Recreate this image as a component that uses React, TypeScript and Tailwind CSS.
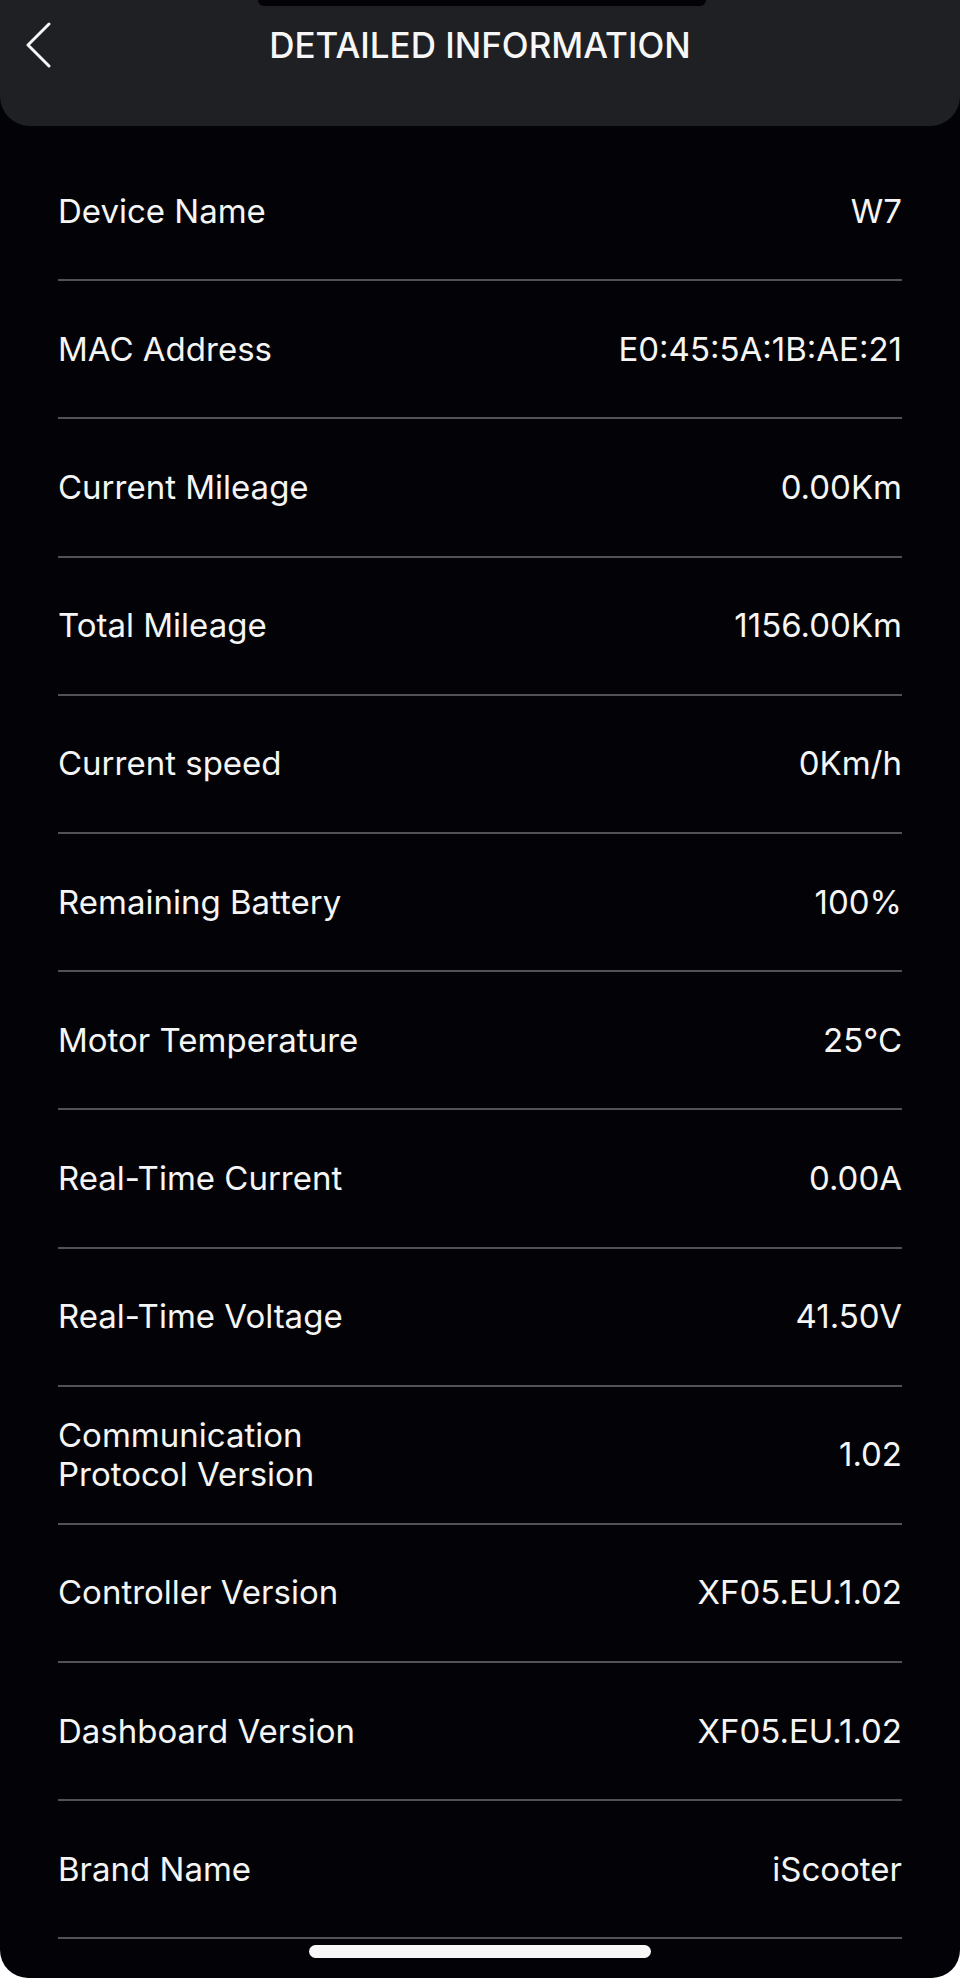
import React from "react";

const rows: { label: string; value: string }[] = [
  { label: "Device Name", value: "W7" },
  { label: "MAC Address", value: "E0:45:5A:1B:AE:21" },
  { label: "Current Mileage", value: "0.00Km" },
  { label: "Total Mileage", value: "1156.00Km" },
  { label: "Current speed", value: "0Km/h" },
  { label: "Remaining Battery", value: "100%" },
  { label: "Motor Temperature", value: "25°C" },
  { label: "Real-Time Current", value: "0.00A" },
  { label: "Real-Time Voltage", value: "41.50V" },
  { label: "Communication Protocol Version", value: "1.02" },
  { label: "Controller Version", value: "XF05.EU.1.02" },
  { label: "Dashboard Version", value: "XF05.EU.1.02" },
  { label: "Brand Name", value: "iScooter" },
];

function BackChevron() {
  return (
    <svg width="30" height="46" viewBox="0 0 30 46" fill="none">
      <polyline
        points="25,2 4,23 25,44"
        stroke="#f5f5f5"
        strokeWidth="3"
        strokeLinecap="round"
        strokeLinejoin="round"
      />
    </svg>
  );
}

export default function App() {
  return (
    <div className="w-[960px] h-[1978px] bg-white" style={{ fontFamily: "Inter, 'Liberation Sans', sans-serif" }}>
      <div className="relative flex flex-col w-full h-full bg-[#030307] rounded-b-[28px] overflow-hidden">
        {/* ── Header ── */}
        <div className="relative h-[126px] shrink-0 bg-[#1f2024] rounded-b-[30px]">
          <div className="absolute left-[258px] top-0 w-[448px] h-[6px] bg-[#030307] rounded-b-[14px]" />
          <div className="relative flex items-center justify-center h-[90px]">
            <div className="absolute left-[24px] top-[22px]">
              <BackChevron />
            </div>
            <h1 className="m-0 text-[35px] font-medium tracking-[0px] text-[#f7f7f7] uppercase">
              Detailed Information
            </h1>
          </div>
        </div>

        {/* ── Rows ── */}
        <div className="flex flex-col pt-[17px] px-[58px]">
          {rows.map((row) => (
            <div
              key={row.label}
              className="flex items-center justify-between h-[138.2px] border-b-2 border-[#515156]"
            >
              <span className="max-w-[340px] text-[33px] leading-[39px] text-[#f5f5f5]">
                {row.label}
              </span>
              <span className="text-[33px] leading-[39px] text-[#f5f5f5]">
                {row.value}
              </span>
            </div>
          ))}
        </div>

        {/* ── Home indicator ── */}
        <div className="flex justify-center pt-[6px]">
          <div className="w-[342px] h-[13px] rounded-full bg-[#f7f7f7]" />
        </div>
      </div>
    </div>
  );
}
